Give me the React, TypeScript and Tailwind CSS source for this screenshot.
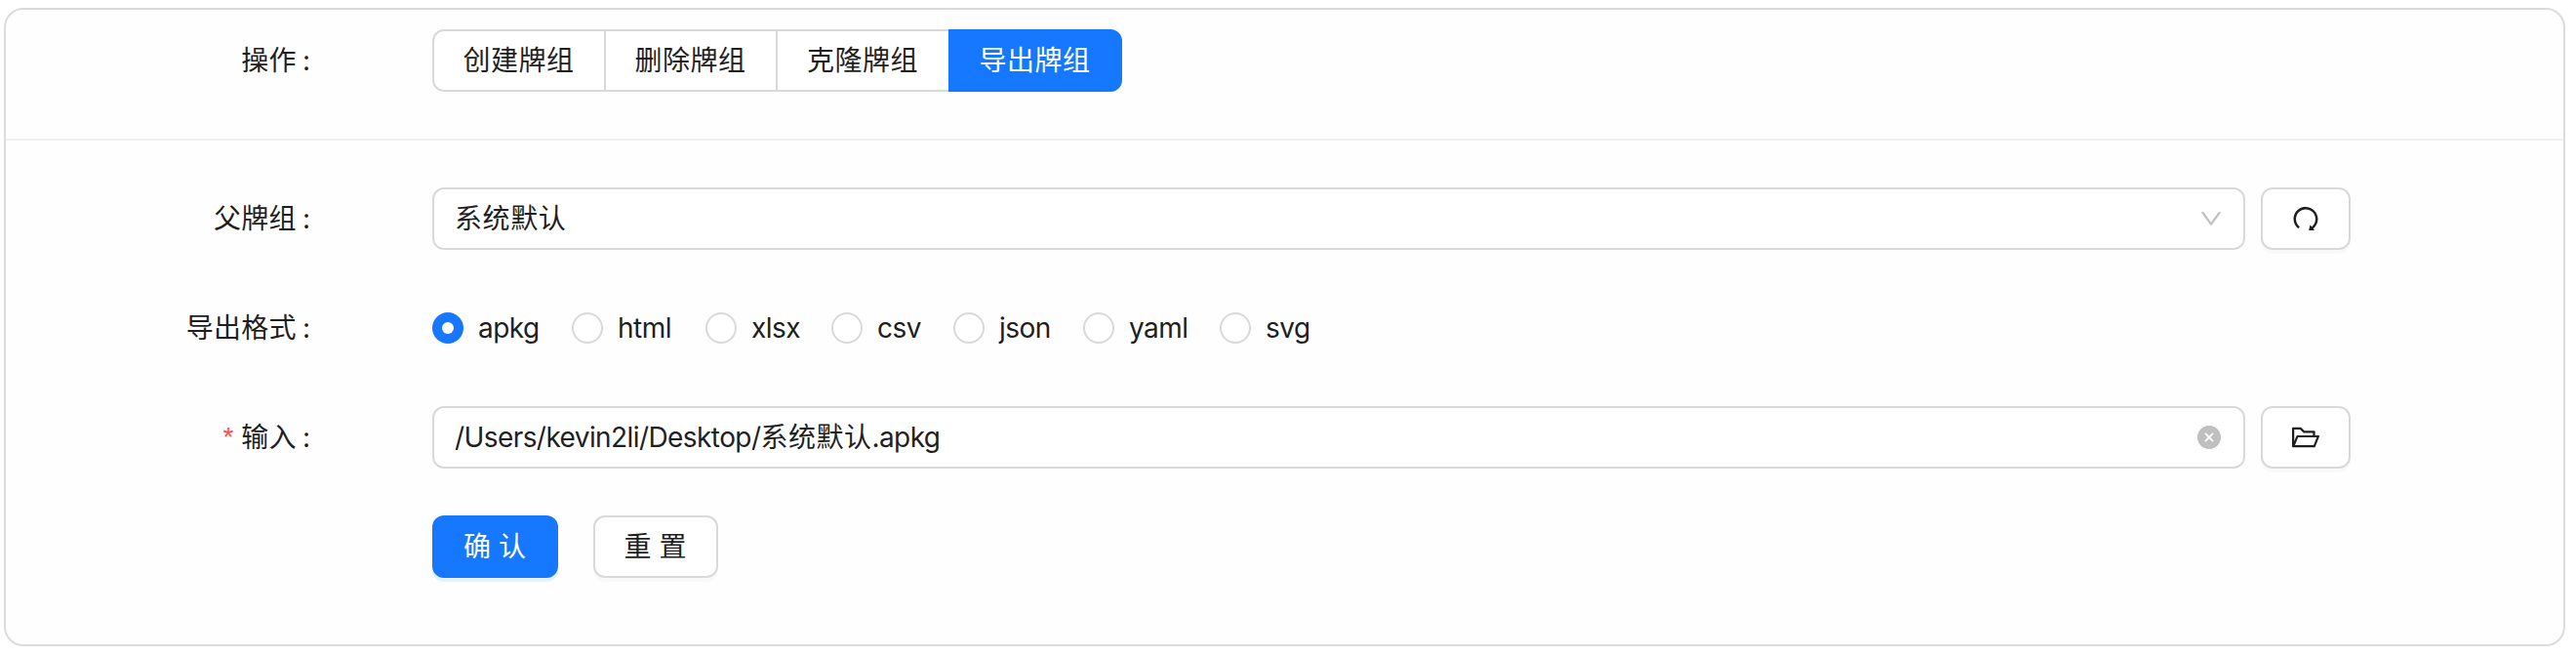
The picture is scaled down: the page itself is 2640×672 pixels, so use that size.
import { useState } from 'react';
import type { ReactNode } from 'react';
import { AiFillCloseCircle, AiOutlineDown, AiOutlineFolderOpen, AiOutlineRedo } from 'react-icons/ai';

const actions = [
  { name: '创建牌组', width: 'w-[178px]' },
  { name: '删除牌组', width: 'w-[178px]' },
  { name: '克隆牌组', width: 'w-[179px]' },
  { name: '导出牌组', width: 'w-[178px]' },
];

const formats = [
  { name: 'apkg', width: 'w-[143px]' },
  { name: 'html', width: 'w-[137px]' },
  { name: 'xlsx', width: 'w-[129px]' },
  { name: 'csv', width: 'w-[125px]' },
  { name: 'json', width: 'w-[133px]' },
  { name: 'yaml', width: 'w-[140px]' },
  { name: 'svg', width: 'w-[110px]' },
];

const ICON_BOX = '64 64 896 896';

const Row = ({ label, required, children }: { label?: string; required?: boolean; children: ReactNode }) => (
  <div className="flex h-16 items-center">
    <div className="flex w-[437px] shrink-0 items-center justify-end pr-[125px]">
      {required && <span className="mr-2 text-[#ff4d4f] font-['Liberation_Sans']">*</span>}
      {label && <span className="tracking-[0.3px]">{label}</span>}
      {label && <span className="ml-[6px]">:</span>}
    </div>
    {children}
  </div>
);

const IconButton = ({ children }: { children: ReactNode }) => (
  <button className="ml-4 flex h-16 w-[92px] items-center justify-center rounded-xl border-2 border-[#d9d9d9] bg-white pr-px shadow-[0_4px_0_rgba(0,0,0,0.02)]">
    {children}
  </button>
);

const App = () => {
  const [action, setAction] = useState('导出牌组');
  const [format, setFormat] = useState('apkg');

  return (
    <div className="h-[672px] w-[2640px] bg-white pl-1 pt-2 text-[28px] leading-[44px] text-[#1f1f1f] font-['Inter','Noto_Sans_CJK_SC',sans-serif]">
      <div className="h-[654px] w-[2625px] rounded-[20px] border-2 border-[#dcdcdc] bg-[#fefefe]">
        <div className="h-[134px] border-b-2 border-[#f0f0f0] pt-5">
          <Row label="操作">
            <div className="flex">
              {actions.map(({ name, width }) => (
                <button
                  key={name}
                  onClick={() => setAction(name)}
                  className={`-ml-[2px] h-16 whitespace-nowrap border-2 pr-px tracking-[0.5px] first:ml-0 first:rounded-l-xl last:rounded-r-xl ${width} ${
                    action === name ? 'z-10 border-[#1677ff] bg-[#1677ff] text-white' : 'border-[#d9d9d9] bg-white'
                  }`}
                >
                  {name}
                </button>
              ))}
            </div>
          </Row>
        </div>

        <div className="flex flex-col gap-12 pt-12">
          <Row label="父牌组">
            <div className="flex h-16 w-[1858px] items-center justify-between rounded-xl border-2 border-[#d9d9d9] bg-white pl-[21px] pr-[21px]">
              <span className="tracking-[0.6px]">系统默认</span>
              <AiOutlineDown viewBox={ICON_BOX} className="size-6 text-[#bfbfbf]" />
            </div>
            <IconButton>
              <AiOutlineRedo viewBox={ICON_BOX} className="size-7" />
            </IconButton>
          </Row>

          <Row label="导出格式">
            <div className="flex">
              {formats.map(({ name, width }) => (
                <div key={name} onClick={() => setFormat(name)} className={`flex items-center ${width}`}>
                  {format === name ? (
                    <span className="flex size-8 items-center justify-center rounded-full bg-[#1677ff]">
                      <span className="size-3 rounded-full bg-white" />
                    </span>
                  ) : (
                    <span className="size-8 rounded-full border-2 border-[#d9d9d9] bg-white" />
                  )}
                  <span className="pl-[15px] tracking-[-0.5px]">{name}</span>
                </div>
              ))}
            </div>
          </Row>

          <Row label="输入" required>
            <div className="flex h-16 w-[1858px] items-center justify-between rounded-xl border-2 border-[#d9d9d9] bg-white pl-[21px] pr-[23px]">
              <span className="tracking-[-0.58px]">
                /Users/kevin2li/Desktop/<span className="tracking-[0.5px]">系统默认</span>.apkg
              </span>
              <AiFillCloseCircle viewBox={ICON_BOX} className="size-6 text-[#bfbfbf]" />
            </div>
            <IconButton>
              <AiOutlineFolderOpen viewBox={ICON_BOX} className="size-7" />
            </IconButton>
          </Row>

          <Row>
            <button className="h-16 w-[129px] rounded-xl bg-[#1677ff] pr-px text-white shadow-[0_4px_0_rgba(5,145,255,0.1)]">
              确 认
            </button>
            <button className="ml-9 h-16 w-[128px] rounded-xl border-2 border-[#d9d9d9] bg-white pr-px shadow-[0_4px_0_rgba(0,0,0,0.02)]">
              重 置
            </button>
          </Row>
        </div>
      </div>
    </div>
  );
};

export default App;
